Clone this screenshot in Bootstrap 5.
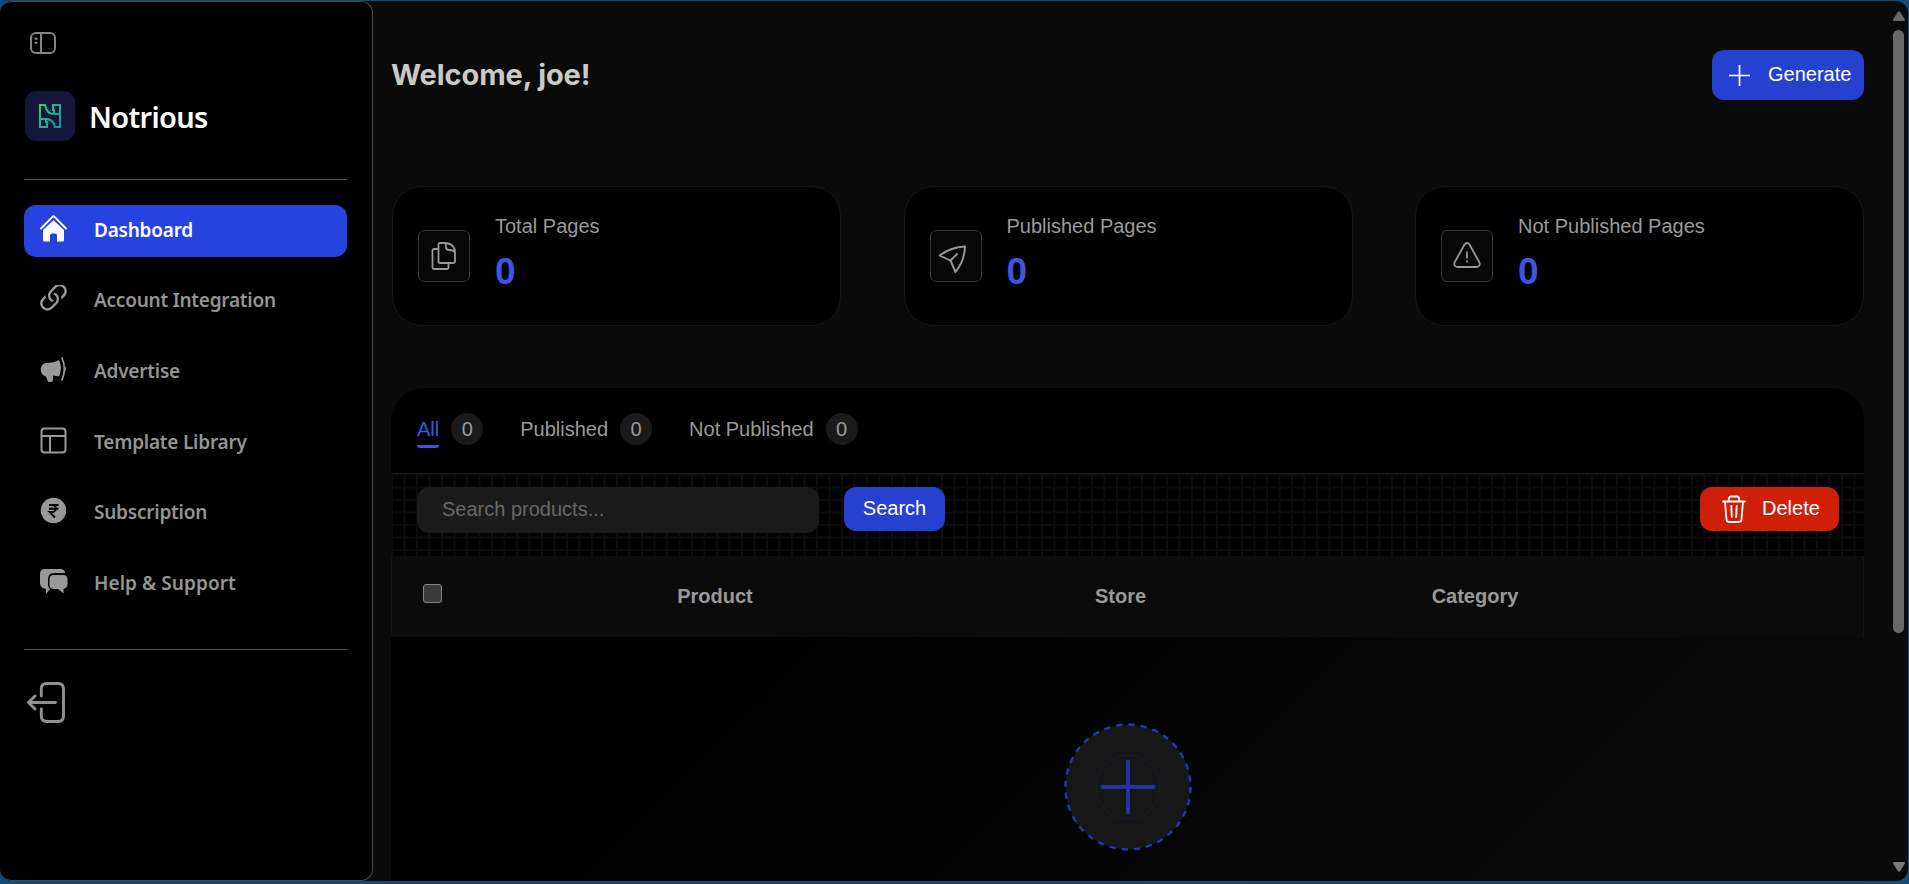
<!DOCTYPE html>
<html lang="en" data-bs-theme="dark">
<head>
<meta charset="utf-8">
<meta name="viewport" content="width=device-width, initial-scale=1">
<title>Notrious</title>
<link href="https://cdn.jsdelivr.net/npm/bootstrap@5.3.0/dist/css/bootstrap.min.css" rel="stylesheet">
<style>
html,body{height:100%;overflow:hidden}
body{background:#124a78;font-family:"Liberation Sans",Arial,sans-serif;font-size:20px;line-height:24px;color:#9a9a9a}
svg{display:block;flex:none}
.frame{height:100vh;padding:1px 1px 3px 0}
.window{background:#0a0a0a;border-radius:12px;overflow:hidden}
.side{width:373px;background:#000;border:1px solid #4d4d4d;border-left:0;border-radius:12px;padding:29px 25px 0 24px;font-family:"Noto Sans","Open Sans",sans-serif;font-weight:600;color:#999}
.toggle{margin-left:5px}
.brand{margin-top:36px;gap:15px;padding-left:1px}
.brand-mark{width:50px;height:50px;border-radius:11px;background:#16163c}
.brand-name{font-size:29px;color:#fff;line-height:36px;letter-spacing:-.7px;padding-top:2px;margin-left:-1px}
.rule{height:1px;background:#555}
.rule-top{margin:38px 0 25px}
.rule-end{margin:39px 0 31px}
.side-item{height:52px;border-radius:12px;padding:0 16px;gap:27px;color:#949494;font-size:19px;font-weight:600;letter-spacing:-.23px;margin-bottom:18.7px;line-height:26px;text-decoration:none}
.side-item svg{margin-bottom:6px}
.side-item span{margin-bottom:3px}
.side-item.active{background:#2643df;color:#fff}
.content{width:1473px;margin-left:18px}
.top{height:50px;margin-top:49px}
.hello{font-family:Inter,"Liberation Sans",sans-serif;font-size:29px;font-weight:700;letter-spacing:-.1px;color:#c9c9c6;margin:0;line-height:36px}
.btn{--bs-btn-font-size:20px;--bs-btn-line-height:24px;--bs-btn-border-radius:12px;--bs-btn-border-width:0}
.btn span{margin-bottom:2px}
.btn-main{--bs-btn-bg:#2640cf;--bs-btn-color:#fff;--bs-btn-hover-bg:#2640cf;--bs-btn-hover-color:#fff}
.btn-del{--bs-btn-bg:#d01f08;--bs-btn-color:#fff;--bs-btn-hover-bg:#d01f08;--bs-btn-hover-color:#fff;width:139px;height:44px;gap:16px;padding:0 0 0 22px}
.btn-gen{width:152px;height:50px;gap:18px;padding:0 0 0 17px}
.btn-find{width:101px;height:44px;padding:0 0 2px}
.stats{margin-top:86px;padding-left:1px}
.stat{width:449px;height:140px;border:1px solid #171717;border-radius:30px;background:#000;padding:24px 25px;gap:25px}
.stat-icon{width:52px;height:52px;border:1px solid #333;border-radius:6px;background:#080808;margin-top:19px;color:#999}
.stat-label{padding-top:3px;line-height:24px}
.stat-num{font-size:37px;font-weight:700;color:#3c55e3;line-height:44px;margin-top:12px}
.panel{margin-top:62px;border-radius:33px 33px 0 0;background:#000;overflow:hidden}
.tabs{height:86px;padding:25px 26px 0;border-bottom:1px solid #1a1a1a}
.count{width:32px;height:32px;border-radius:50%;background:#1a1a1a}
.tab-on{color:#3c55e3;border-bottom:3px solid #3c55e3;border-radius:0 0 3px 3px;padding-top:4px;height:35px}
.tab-off{padding-top:4px}
.tools{height:82px;padding:13px 25px 0 26px;background-color:#000;background-image:linear-gradient(#0c0c0c 1.5px,transparent 1.5px),linear-gradient(90deg,#0c0c0c 1.5px,transparent 1.5px);background-size:12.5px 12.5px}
.tools .form-control{width:402px;height:46px;border:0;border-radius:12px;background:#1a1a1a;padding:0 25px 2px;font-size:20px;margin-right:25px}
.form-control::placeholder{color:#686868;opacity:1}
.thead-row{height:81px;background:#0b0b0b;border:solid #141414;border-width:0 1px;font-weight:700;padding-bottom:2px}
.check{width:19px;height:19px;border:1px solid #868686;border-radius:3px;background:#3b3b3b;margin:-4px 0 0 31px}
.empty{height:244px;background:linear-gradient(135deg,#000 20%,#080808 80%);padding-top:86px}
.scroll{width:19px;padding-top:10px;padding-bottom:9px}
.thumb{width:11px;height:603px;border-radius:6px;background:#686868;margin-top:9px}
</style>
</head>
<body>
<div class="frame">
<div class="window d-flex h-100">
<aside class="side flex-shrink-0">
<svg class="toggle" width="28" height="24" viewBox="0 0 28 24" fill="none" stroke="#858585" stroke-width="2"><rect x="2" y="2" width="24" height="20" rx="5"/><path d="M12 2v20M5.500 7.700h3M5.500 11.800h3"/></svg>
<div class="brand d-flex align-items-center">
<div class="brand-mark d-flex align-items-center justify-content-center">
<svg width="24" height="26" viewBox="0 0 24 26" fill="none" stroke="url(#g)" stroke-width="2"><defs><linearGradient id="g" x1="0" y1="0" x2="1" y2="1"><stop offset="0" stop-color="#2dcf70"/><stop offset="1" stop-color="#1295a0"/></linearGradient></defs><path d="M2 2h5c1 5 4 9 9 9V7h-1V2h7v22h-5c-1-5-4-8-9-8v3h1v5H2zM2 16h6M22 11h-6"/></svg>
</div>
<span class="brand-name">Notrious</span>
</div>
<div class="rule rule-top"></div>
<nav>
<a class="side-item active d-flex align-items-center"><svg width="27" height="28" viewBox="0 0 27 28"><path d="M13.500 6.200 24 16v10q0 1.500-1.500 1.500H17v-6q0-2-2-2h-3q-2 0-2 2v6H4.500Q3 27.500 3 26V16z" fill="#fff"/><path d="M1 14.500 12.500 2.800q1-1 2 0L26 14.500" fill="none" stroke="#fff" stroke-width="1.900" stroke-linecap="round"/></svg><span>Dashboard</span></a>
<a class="side-item d-flex align-items-center"><svg width="27" height="27" viewBox="2.400 2.400 11.200 11.200" fill="#999"><path d="M4.715 6.542 3.343 7.914a3 3 0 1 0 4.243 4.243l1.828-1.829A3 3 0 0 0 8.586 5.500L8 6.086a1.002 1.002 0 0 0-.154.199 2 2 0 0 1 .861 3.337L6.880 11.450a2 2 0 1 1-2.830-2.830l.793-.792a4.018 4.018 0 0 1-.128-1.287z"/><path d="M6.586 4.672A3 3 0 0 0 7.414 9.500l.775-.776a2 2 0 0 1-.896-3.346L9.120 3.550a2 2 0 1 1 2.830 2.830l-.793.792c.112.420.155.855.128 1.287l1.372-1.372a3 3 0 1 0-4.243-4.243L6.586 4.672z"/></svg><span>Account Integration</span></a>
<a class="side-item d-flex align-items-center"><svg width="27" height="27" viewBox="0 0 27 27"><path d="M19 4c2.500 5 2.500 11 0 16.500L13 19.500V24q0 2-2 2H9q-1 0-1.300-1L6 20.500C-1 19-1 8 6 7q8 0 13-3z" fill="#999"/><path d="M22 2c3 7 3 15 0 22" fill="none" stroke="#999" stroke-width="1.700" stroke-linecap="round"/><path d="M24.500 9q2.500 4 0 8z" fill="#999"/></svg><span>Advertise</span></a>
<a class="side-item d-flex align-items-center"><svg width="27" height="27" viewBox="0 0 27 27" fill="none" stroke="#999" stroke-width="2"><rect x="1.500" y="1.500" width="24" height="24" rx="3"/><path d="M1.500 9h24M10 9v16.500"/></svg><span>Template Library</span></a>
<a class="side-item d-flex align-items-center"><svg width="27" height="27" viewBox="0 0 27 27"><circle cx="13.500" cy="13.500" r="12.700" fill="#999"/><path d="M9 8h9.500M9 11.700h9.500M9 8h3.500c4.500 0 4.500 7 0 7H9.500l5.500 5.500" fill="none" stroke="#000" stroke-width="1.900"/></svg><span>Subscription</span></a>
<a class="side-item d-flex align-items-center"><svg class="me-n1" width="28" height="27" viewBox="0 0 28 27" fill="#999"><path d="M5 1h15q5 0 5 4H14q-6 0-6 6v6q0 2 2 4l-4 5v-5Q0 20 0 15V6q0-5 5-5z"/><path d="M14 7h9q4.500 0 4.500 4.500V16q0 4-4 4.700v4.800L18 21h-4q-4.500 0-4.500-4.500v-5Q9.500 7 14 7z"/></svg><span style="margin-left:-1px;letter-spacing:.08px">Help &amp; Support</span></a>
</nav>
<div class="rule rule-end"></div>
<svg style="margin-left:2px" width="40" height="43" viewBox="0 0 40 43" fill="none" stroke="#919191" stroke-width="2.900" stroke-linecap="round" stroke-linejoin="round"><path d="M15.300 15V8q0-5.500 5.500-5.500H32q5.500 0 5.500 5.500v27q0 5.500-5.500 5.500H20.800q-5.500 0-5.500-5.500v-7"/><path d="M29.500 21.500H2.500M9 15 2.500 21.500 9 28"/></svg>
</aside>
<main class="content flex-shrink-0">
<header class="top d-flex align-items-center justify-content-between">
<h1 class="hello">Welcome, joe!</h1>
<button class="btn btn-main btn-gen d-flex align-items-center"><svg width="21" height="21" viewBox="0 0 21 21" stroke="#fff" stroke-width="1.700"><path d="M10.500 0v21M0 10.500h21"/></svg><span>Generate</span></button>
</header>
<section class="stats d-flex justify-content-between">
<div class="stat d-flex"><div class="stat-icon d-flex align-items-center justify-content-center"><svg width="26" height="28" viewBox="0 0 26 28" fill="none" stroke="currentColor" stroke-width="1.800" stroke-linejoin="round"><path d="M7.500 7H3q-1.500 0-1.500 1.500v17Q1.500 27 3 27h13q1.500 0 1.500-1.500V21"/><path d="M7.500 2.500Q7.500 1 9 1h6q9 1 9 10v8.500q0 1.500-1.500 1.500H9q-1.500 0-1.500-1.500zM15 1q-.5 0 0 4 0 3 3 3 5 0 6 3"/></svg></div><div><div class="stat-label">Total Pages</div><div class="stat-num">0</div></div></div>
<div class="stat d-flex"><div class="stat-icon d-flex align-items-center justify-content-center"><svg style="margin:5px 7px 0 0" width="28" height="28" viewBox="0 0 28 28" fill="none" stroke="currentColor" stroke-width="1.900" stroke-linejoin="round"><path d="M1.500 10.500Q13 2 27 1.500 26.500 16 17.500 27L12.500 15.500zM12.500 15.500 19.500 8.500"/></svg></div><div><div class="stat-label">Published Pages</div><div class="stat-num">0</div></div></div>
<div class="stat d-flex"><div class="stat-icon d-flex align-items-center justify-content-center"><svg style="margin-bottom:3px" width="28" height="26" viewBox="0 0 28 26" fill="none" stroke="currentColor" stroke-width="1.800"><path d="M11.500 2.500q2.500-3 5 0L26.500 20.500q1 4-3 4.500h-19q-4-.5-3-4.500zM14 9.500v7M14 18.500v2"/></svg></div><div><div class="stat-label">Not Published Pages</div><div class="stat-num">0</div></div></div>
</section>
<section class="panel">
<div class="tabs d-flex align-items-start"><span class="tab-on">All</span><span class="count d-flex align-items-center justify-content-center" style="margin:0 37px 0 12px">0</span><span class="tab-off">Published</span><span class="count d-flex align-items-center justify-content-center" style="margin:0 37px 0 12px">0</span><span class="tab-off">Not Published</span><span class="count d-flex align-items-center justify-content-center" style="margin-left:12px">0</span></div>
<div class="tools d-flex align-items-start"><input class="form-control" placeholder="Search products..."><button class="btn btn-main btn-find">Search</button>
<button class="btn btn-del d-flex align-items-center ms-auto"><svg width="24" height="28" viewBox="0 0 24 28" fill="none" stroke="#fff" stroke-width="1.800" stroke-linecap="round" stroke-linejoin="round"><path d="M1 6.500h22M3 6.500l1.500 18q.3 2.500 2.500 2.500h10q2.200 0 2.500-2.500l1.500-18M6.500 6.500l.5-3.500q.3-1.500 2-1.500h6q1.700 0 2 1.500l.5 3.500M9.300 11l.5 11M14.700 11l-.5 11"/></svg><span>Delete</span></button></div>
<div class="thead-row d-flex align-items-center text-center"><span class="check"></span><span style="width:546px">Product</span><span style="width:265px">Store</span><span style="width:444px">Category</span></div>
<div class="empty d-flex justify-content-center align-items-start"><svg width="128" height="128" viewBox="0 0 128 128"><circle cx="64" cy="64" r="62.500" fill="#171717" stroke="#2638b0" stroke-width="2.300" stroke-dasharray="6.200 6.070"/><circle cx="64" cy="64" r="32" fill="none" stroke="#1c1c3a"/><path d="M64 38.500v51M38.500 64h51" stroke="#2433a6" stroke-width="3.800" stroke-linecap="round"/></svg></div>
</section>
</main>
<div class="scroll ms-auto d-flex flex-column align-items-center">
<svg width="12" height="10" viewBox="0 0 12 10" fill="#686868"><path d="M5 .8q1-1.300 2 0l5 7.700q0 1.500-1 1.500H1Q0 10 0 8.500z"/></svg>
<div class="thumb"></div>
<svg class="mt-auto" width="12" height="10" viewBox="0 0 12 10" fill="#7a7a7a"><path d="M5 9.200q1 1.300 2 0l5-7.700Q12 0 11 0H1Q0 0 0 1.500z"/></svg>
</div>
</div>
</div>
<script src="https://cdn.jsdelivr.net/npm/bootstrap@5.3.0/dist/js/bootstrap.bundle.min.js"></script>
</body>
</html>
